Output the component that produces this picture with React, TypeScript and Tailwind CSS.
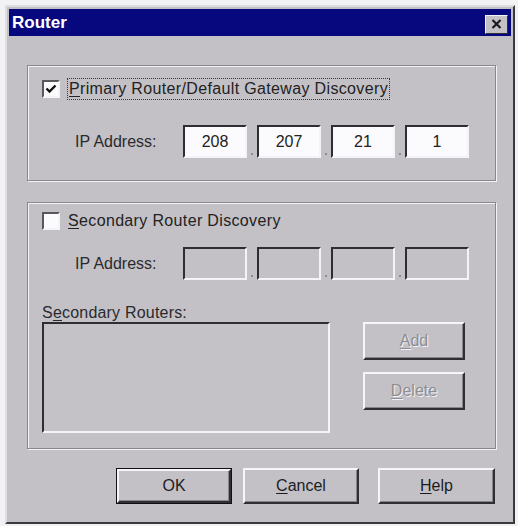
import React from "react"

const font = "font-['Liberation_Sans',Arial,sans-serif]"

function Sunken({ value, disabled }: { value?: string; disabled?: boolean }) {
  return (
    <div
      className={`flex h-[33px] w-[64px] items-center justify-center border-2 border-t-[#2e2d31] border-l-[#2e2d31] border-r-[#f4f3f7] border-b-[#f4f3f7] text-[16px] text-[#222] ${
        disabled ? "bg-[#c3c1c6]" : "bg-[#fbfbfd]"
      }`}
    >
      {value}
    </div>
  )
}

function IpRow({ values, disabled }: { values?: string[]; disabled?: boolean }) {
  const v = values ?? ["", "", "", ""]
  return (
    <div className="flex items-center">
      <span className="ml-[47px] w-[108px] shrink-0 whitespace-nowrap text-[16px] text-[#2a2a2e]">IP Address:</span>
      <div className="flex">
        {v.map((x, i) => (
          <div key={i} className="flex items-end">
            {i > 0 && (
              <div className="flex h-[33px] w-[10px] items-end justify-center pb-[3px]">
                <div className="h-[2px] w-[2px] bg-[#8d8c91]" />
              </div>
            )}
            <Sunken value={x} disabled={disabled} />
          </div>
        ))}
      </div>
    </div>
  )
}

function CheckBox({ checked }: { checked?: boolean }) {
  return (
    <div className="flex h-[18px] w-[18px] shrink-0 items-center justify-center border-2 border-t-[#58575b] border-l-[#58575b] border-r-[#f4f3f7] border-b-[#f4f3f7] bg-[#fbfbfd]">
      {checked && (
        <svg width="12" height="12" viewBox="0 0 12 12">
          <path d="M1.5 5.5 L4.5 8.5 L10.5 2.5" fill="none" stroke="#111" strokeWidth="2.4" />
        </svg>
      )}
    </div>
  )
}

function Button({
  children,
  w,
  h,
  disabled,
  isDefault,
  className = "",
}: {
  children: React.ReactNode
  w: string
  h: string
  disabled?: boolean
  isDefault?: boolean
  className?: string
}) {
  return (
    <div className={`${w} ${h} ${className} ${isDefault ? "border border-[#111]" : ""}`}>
      <div className="flex h-full w-full items-center justify-center border-2 border-t-[#f6f5f9] border-l-[#f6f5f9] border-r-[#2f2e32] border-b-[#2f2e32] shadow-[inset_-1px_-1px_0_#86858a] text-[16px]">
        <span
          className={
            disabled
              ? "text-[#8e8d92] [text-shadow:1px_1px_0_#f4f3f7]"
              : "text-[#1c1c1f]"
          }
        >
          {children}
        </span>
      </div>
    </div>
  )
}

export default function App() {
  return (
    <div className={`h-[526px] w-[518px] bg-[#f2f1f4] pt-[5px] pl-[5px] ${font}`}>
      <div className="h-[519px] w-[510px] border-2 border-t-[#dedde2] border-l-[#dedde2] border-r-[#3a393d] border-b-[#3a393d] bg-[#c3c1c6] p-[2px]">
        {/* Title bar */}
        <div className="flex h-[27px] items-center justify-between bg-[#08087e] pl-[3px] pr-[3px]">
          <span className="text-[17px] font-bold leading-none text-white">Router</span>
          <div className="mt-[3px] flex h-[19px] w-[23px] items-center justify-center border border-t-[#f2f1f5] border-l-[#f2f1f5] border-r-[#2f2e32] border-b-[#2f2e32] bg-[#c3c1c6]">
            <svg width="11" height="10" viewBox="0 0 11 10">
              <path d="M1.5 1 L9.5 9 M9.5 1 L1.5 9" stroke="#1a1a1a" strokeWidth="2.2" />
            </svg>
          </div>
        </div>

        {/* Primary group */}
        <div className="ml-[18px] mt-[29px] h-[116px] w-[469px] border border-[#88878c] shadow-[inset_1px_1px_0_#f3f2f6,1px_1px_0_#f3f2f6]">
          <div className="ml-[14px] mt-[12px] flex items-center">
            <CheckBox checked />
            <span className="ml-[7px] whitespace-nowrap border border-dotted border-[#3a3a3a] px-[1px] text-[16px] leading-[20px] tracking-[0.35px] text-[#222]">
              <span className="underline underline-offset-2">P</span>rimary Router/Default Gateway Discovery
            </span>
          </div>
          <div className="mt-[25px]">
            <IpRow values={["208", "207", "21", "1"]} />
          </div>
        </div>

        {/* Secondary group */}
        <div className="ml-[18px] mt-[21px] h-[247px] w-[469px] border border-[#88878c] shadow-[inset_1px_1px_0_#f3f2f6,1px_1px_0_#f3f2f6]">
          <div className="ml-[14px] mt-[8px] flex items-center">
            <CheckBox />
            <span className="ml-[8px] whitespace-nowrap text-[16px] leading-[20px] tracking-[0.35px] text-[#222]">
              <span className="underline underline-offset-2">S</span>econdary Router Discovery
            </span>
          </div>
          <div className="mt-[16px]">
            <IpRow disabled />
          </div>
          <div className="ml-[14px] mt-[24px] whitespace-nowrap text-[16px] leading-[18px] tracking-[0.2px] text-[#2a2a2e]">
            S<span className="underline underline-offset-2">e</span>condary Routers:
          </div>
          <div className="flex">
            <div className="ml-[14px] h-[111px] w-[288px] border-2 border-t-[#2e2d31] border-l-[#2e2d31] border-r-[#f4f3f7] border-b-[#f4f3f7] bg-[#c4c2c7]" />
            <div className="ml-[33px] flex flex-col">
              <Button w="w-[102px]" h="h-[38px]" disabled>
                <span className="underline underline-offset-2">A</span>dd
              </Button>
              <Button w="w-[102px]" h="h-[38px]" disabled className="mt-[12px]">
                <span className="underline underline-offset-2">D</span>elete
              </Button>
            </div>
          </div>
        </div>

        {/* Dialog buttons */}
        <div className="ml-[107px] mt-[19px] flex">
          <Button w="w-[116px]" h="h-[36px]" isDefault>
            OK
          </Button>
          <Button w="w-[116px]" h="h-[36px]" className="ml-[11px]">
            <span className="underline underline-offset-2">C</span>ancel
          </Button>
          <Button w="w-[117px]" h="h-[36px]" className="ml-[19px]">
            <span className="underline underline-offset-2">H</span>elp
          </Button>
        </div>
      </div>
    </div>
  )
}
